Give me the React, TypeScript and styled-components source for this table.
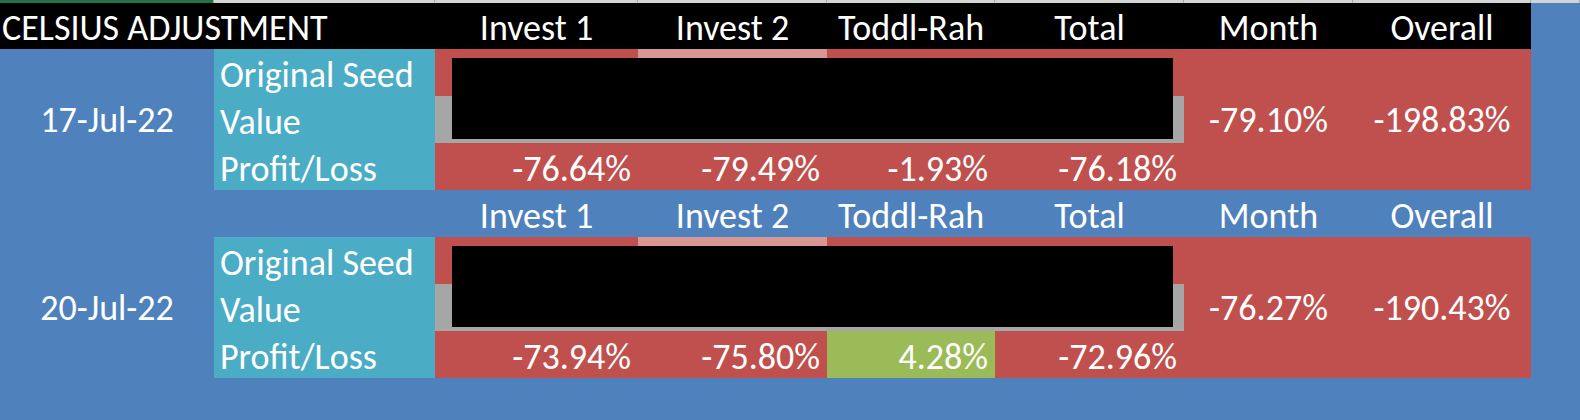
import styled, { createGlobalStyle, css } from "styled-components";

const GlobalStyle = createGlobalStyle`
    html, body {
        margin: 0;
        padding: 0;
        background-color: #4F81BD;
    }
    body {
        font-family: "Carlito", "Lato", "Open Sans", sans-serif;
        -webkit-font-smoothing: antialiased;
    }
`

const COLUMNS = "214px 221px 203px 189px 168px 189px 169px 178px"

const Sheet = styled.div`
    width: 1580px;
    height: 420px;
    overflow: hidden;
    background-color: #4F81BD;
    color: #ffffff;
`

const ColumnStrip = styled.div`
    display: grid;
    grid-template-columns: ${COLUMNS} 1fr;
    height: 3px;
`

const StripCell = styled.div<{ $selected?: boolean }>`
    background-color: ${p => (p.$selected ? "#217346" : "#D4D4D4")};
    border-right: 1px solid #A8A8A8;
`

const Block = styled.div<{ $head: number }>`
    position: relative;
    display: grid;
    grid-template-columns: ${COLUMNS};
    grid-template-rows: ${p => p.$head}px repeat(3, 47px);
    width: 1531px;
`

const bottomText = css`
    display: flex;
    align-items: flex-end;
    font-size: 36px;
    line-height: 36px;
    padding-bottom: 3px;
    white-space: nowrap;
    box-sizing: border-box;
`

const TitleCell = styled.div<{ $dark?: boolean }>`
    ${bottomText};
    grid-column: span 2;
    padding-left: 2px;
    background-color: ${p => (p.$dark ? "#000000" : "transparent")};
`

const HeadCell = styled.div<{ $dark?: boolean }>`
    ${bottomText};
    justify-content: center;
    background-color: ${p => (p.$dark ? "#000000" : "transparent")};
`

const DateCell = styled.div`
    grid-row: span 3;
    display: flex;
    align-items: center;
    justify-content: center;
    font-size: 36px;
`

const LabelCell = styled.div`
    ${bottomText};
    padding-left: 6px;
    background-color: #4BACC6;
`

type Tone = "red" | "pink" | "gray" | "green"

const tones: Record<Tone, string> = {
    red: "#C0504D",
    pink: "#DA9694",
    gray: "#A6A6A6",
    green: "#9BBB59",
}

const FillCell = styled.div<{ $tone: Tone }>`
    background-color: ${p => tones[p.$tone]};
`

const ValueCell = styled.div<{ $tone: Tone }>`
    ${bottomText};
    justify-content: flex-end;
    padding-right: 7px;
    background-color: ${p => tones[p.$tone]};
`

const SummaryCell = styled.div`
    grid-row: span 3;
    display: flex;
    align-items: center;
    justify-content: center;
    font-size: 36px;
    background-color: #C0504D;
`

// black box that hides the seed amounts
const Redaction = styled.div<{ $head: number }>`
    position: absolute;
    top: ${p => p.$head + 9}px;
    left: 452px;
    width: 721px;
    height: 81px;
    background-color: #000000;
`

type Entry = {
    date: string
    seedTones: Tone[]
    profits: { value: string; tone: Tone }[]
    month: string
    overall: string
}

const entries: Entry[] = [
    {
        date: "17-Jul-22",
        seedTones: ["red", "pink", "red", "red"],
        profits: [
            { value: "-76.64%", tone: "red" },
            { value: "-79.49%", tone: "red" },
            { value: "-1.93%", tone: "red" },
            { value: "-76.18%", tone: "red" },
        ],
        month: "-79.10%",
        overall: "-198.83%",
    },
    {
        date: "20-Jul-22",
        seedTones: ["red", "pink", "red", "red"],
        profits: [
            { value: "-73.94%", tone: "red" },
            { value: "-75.80%", tone: "red" },
            { value: "4.28%", tone: "green" },
            { value: "-72.96%", tone: "red" },
        ],
        month: "-76.27%",
        overall: "-190.43%",
    },
]

const headings = ["Invest 1", "Invest 2", "Toddl-Rah", "Total", "Month", "Overall"]

const AdjustmentBlock = ({ entry, first }: { entry: Entry; first: boolean }) => {
    const head = first ? 46 : 47
    return (
        <Block $head={head}>
            <TitleCell $dark={first}>{first ? "CELSIUS ADJUSTMENT" : ""}</TitleCell>
            {headings.map(h => (
                <HeadCell key={h} $dark={first}>{h}</HeadCell>
            ))}

            <DateCell>{entry.date}</DateCell>
            <LabelCell>Original Seed</LabelCell>
            {entry.seedTones.map((t, i) => (
                <FillCell key={"s" + i} $tone={t} />
            ))}
            <SummaryCell>{entry.month}</SummaryCell>
            <SummaryCell>{entry.overall}</SummaryCell>

            <LabelCell>Value</LabelCell>
            {[0, 1, 2, 3].map(i => (
                <FillCell key={"v" + i} $tone="gray" />
            ))}

            <LabelCell>Profit/Loss</LabelCell>
            {entry.profits.map((p, i) => (
                <ValueCell key={"p" + i} $tone={p.tone}>{p.value}</ValueCell>
            ))}

            <Redaction $head={head} />
        </Block>
    )
}

export default function App() {
    return (
        <Sheet>
            <GlobalStyle />
            <ColumnStrip>
                <StripCell $selected />
                {[1, 2, 3, 4, 5, 6, 7, 8].map(i => (
                    <StripCell key={i} />
                ))}
            </ColumnStrip>
            {entries.map((e, i) => (
                <AdjustmentBlock key={e.date} entry={e} first={i === 0} />
            ))}
        </Sheet>
    )
}
